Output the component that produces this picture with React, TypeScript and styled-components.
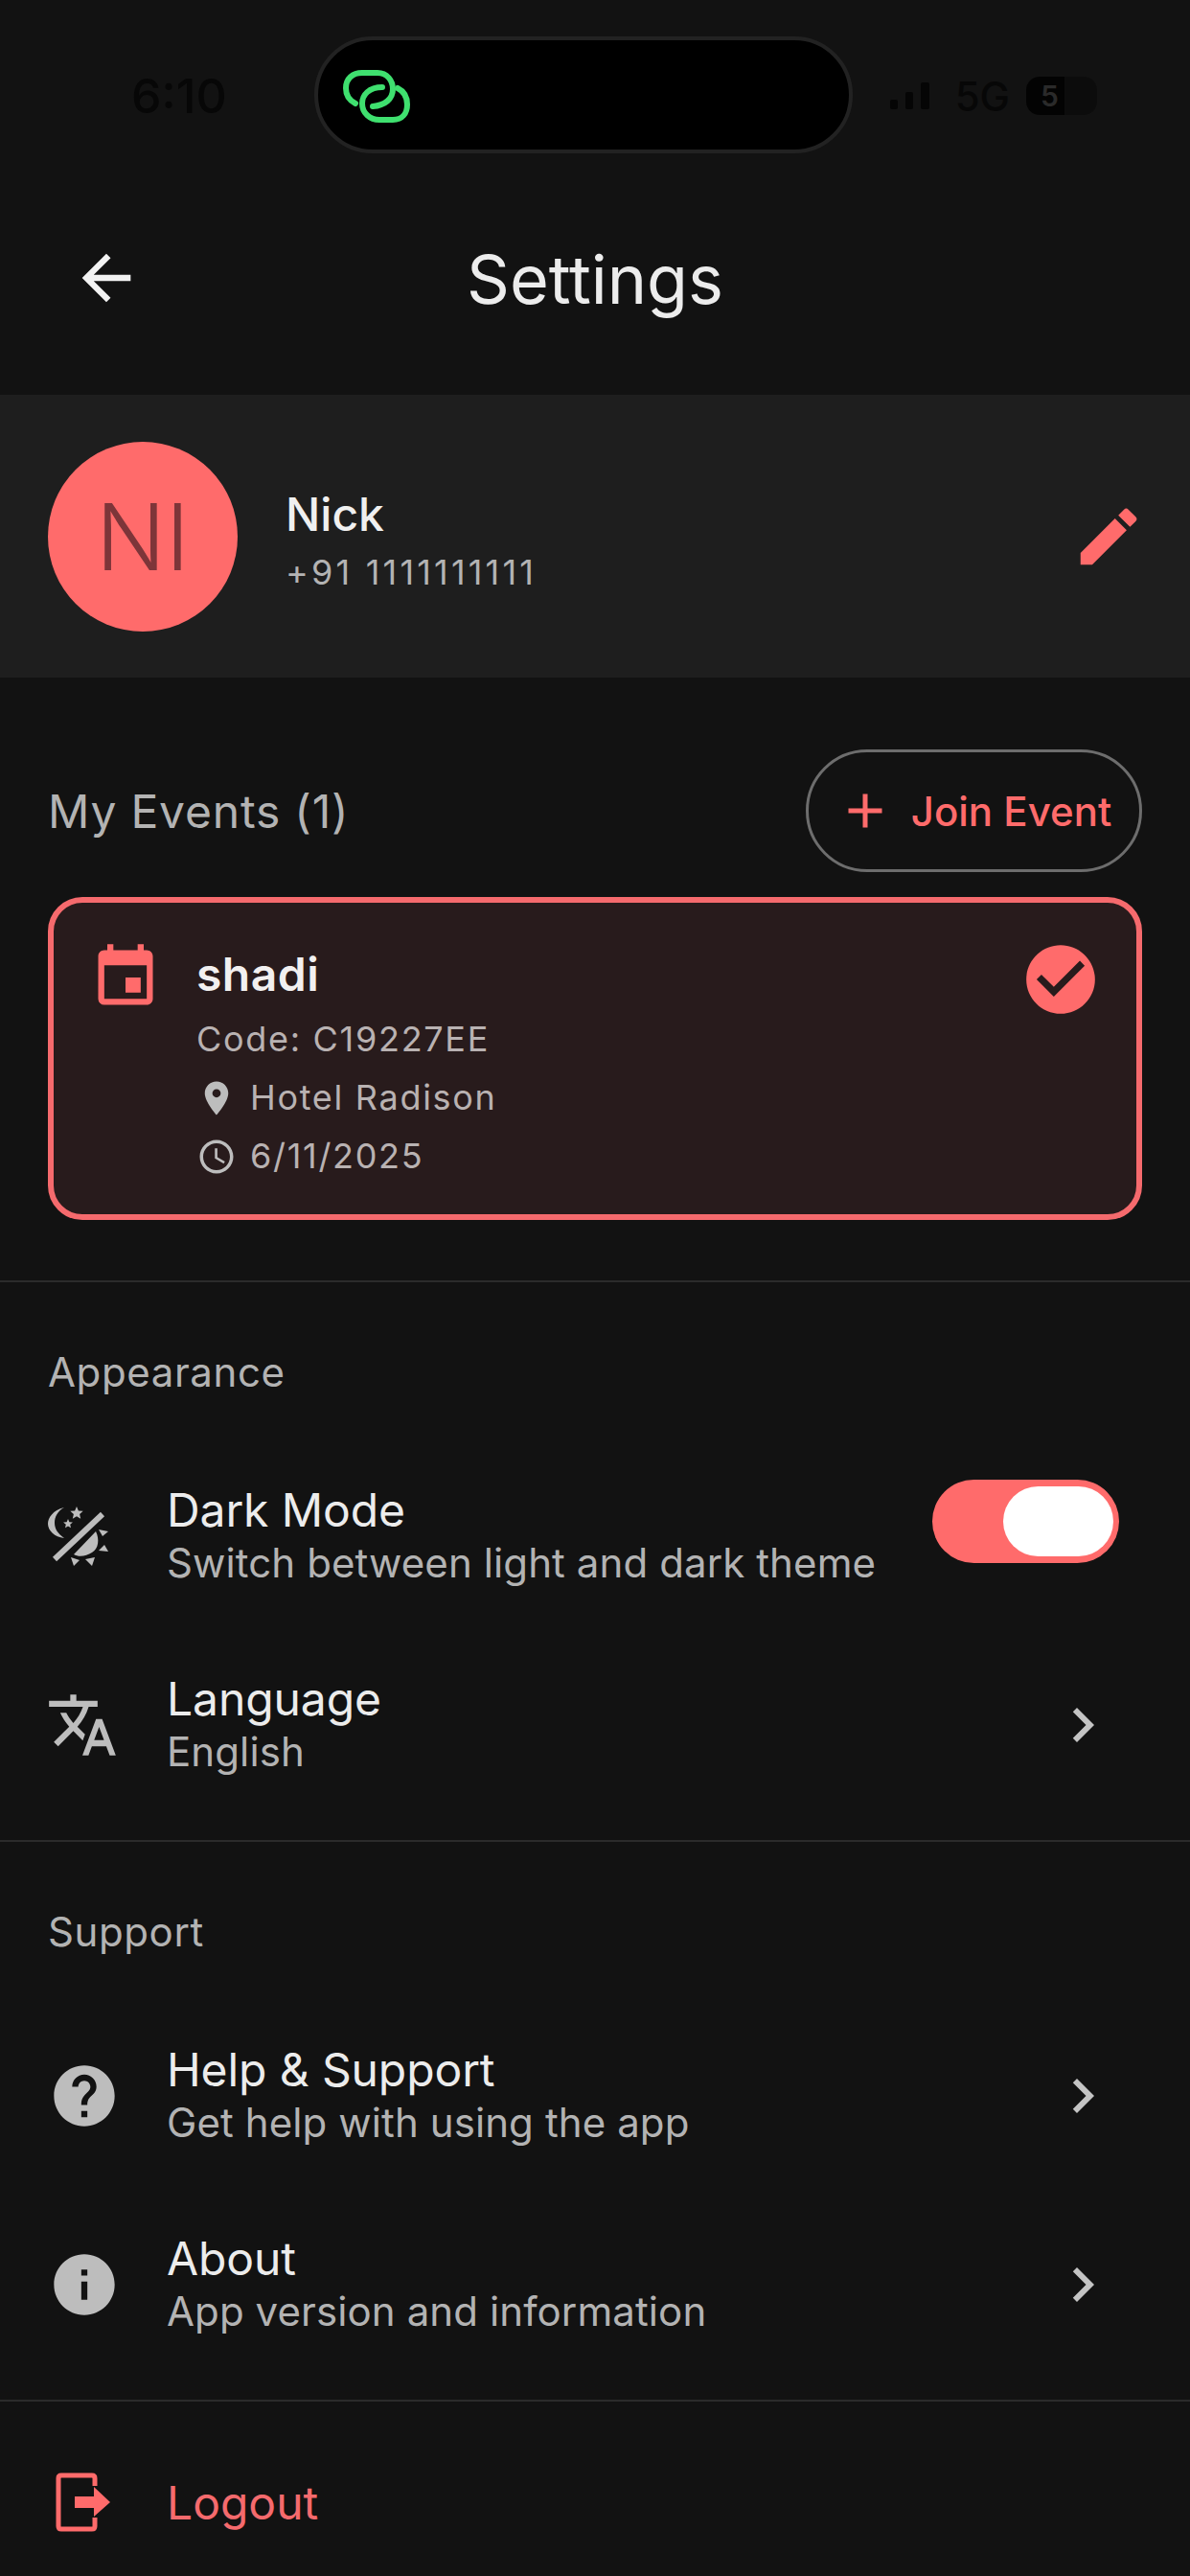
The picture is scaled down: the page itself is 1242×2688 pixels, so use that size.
import React from 'react';
import styled, { createGlobalStyle } from 'styled-components';
import {
  MdAccessTime, MdAdd, MdArrowBack, MdCheckCircle, MdChevronRight, MdEdit,
  MdEvent, MdHelp, MdInfo, MdLocationOn, MdTranslate,
} from 'react-icons/md';

const CORAL = '#ff6b6b';
const MUTED = '#b3b3b3';

const Global = createGlobalStyle`
  html, body { margin: 0; padding: 0; background: #121212; }
  * { box-sizing: border-box; }
  body { font-family: Inter, "Noto Sans", sans-serif; }
`;

const Page = styled.div`
  width: 1242px;
  height: 2688px;
  overflow: hidden;
  background: #121212;
  color: #f2f2f2;
  display: flex;
  flex-direction: column;
  & > * { flex: none; }
`;

const StatusBar = styled.div`
  height: 200px;
  padding: 38px 97px 0 137px;
  display: flex;
  align-items: flex-start;
  justify-content: space-between;
`;
const Clock = styled.div`
  width: 100px;
  height: 124px;
  display: flex;
  align-items: center;
  font-size: 50px;
  font-weight: 500;
  color: #070707;
`;
const Island = styled.div`
  width: 562px;
  height: 122px;
  margin-left: 91px;
  border-radius: 61px;
  background: #000;
  border: 4px solid #222;
  padding: 31px 0 0 26px;
  display: flex;
  align-items: flex-start;
`;
const StatusRight = styled.div`
  flex: 1;
  height: 124px;
  display: flex;
  align-items: center;
  justify-content: flex-end;
  gap: 25px;
`;
const Network = styled.span`
  font-size: 42px;
  font-weight: 500;
  color: #070707;
  margin-right: -8px;
`;
const Battery = styled.div`
  width: 74px;
  height: 40px;
  border-radius: 14px;
  background: linear-gradient(90deg, #030303 0 54%, #0c0c0c 54% 100%);
  color: #2a2a2a;
  font-size: 30px;
  font-weight: 600;
  padding-left: 15px;
  display: flex;
  align-items: center;
`;

const Header = styled.header`
  height: 212px;
  padding: 0 0 30px 0;
  display: flex;
  align-items: center;
  position: relative;
  justify-content: center;
`;
const BackButton = styled.div`
  position: absolute;
  left: 73px;
  top: 52px;
  display: flex;
  color: #f2f2f2;
`;
const Title = styled.h1`
  margin: 0;
  font-size: 70px;
  font-weight: 400;
  color: #ececec;
`;

const Profile = styled.section`
  height: 295px;
  background: #1e1e1e;
  display: flex;
  align-items: center;
  padding: 0 50px;
`;
const Avatar = styled.div`
  width: 198px;
  height: 198px;
  border-radius: 50%;
  background: ${CORAL};
  color: #7d3539;
  display: flex;
  align-items: center;
  justify-content: center;
  font-size: 96px;
  font-weight: 300;
  flex: none;
`;
const ProfileText = styled.div`
  margin: 7px 0 0 50px;
  flex: 1;
  display: flex;
  flex-direction: column;
  gap: 9px;
`;
const Name = styled.div`
  font-size: 48px;
  font-weight: 500;
  line-height: 58px;
  color: #f0f0f0;
`;
const Phone = styled.div`
  font-size: 36px;
  line-height: 44px;
  letter-spacing: 3.2px;
  color: ${MUTED};
`;
const EditSlot = styled.div`
  display: flex;
  color: ${CORAL};
  margin-right: -4px;
`;

const Events = styled.section`
  padding: 75px 50px 63px;
`;
const EventsHead = styled.div`
  display: flex;
  align-items: center;
  justify-content: space-between;
`;
const SectionLabel = styled.div`
  font-size: 48px;
  font-weight: 400;
  letter-spacing: 0.8px;
  color: ${MUTED};
`;
const JoinButton = styled.div`
  width: 351px;
  height: 128px;
  border: 3px solid #6d6d6d;
  border-radius: 64px;
  color: ${CORAL};
  display: flex;
  align-items: center;
  justify-content: center;
  gap: 18px;
  font-size: 42px;
  font-weight: 500;
`;
const EventCard = styled.div`
  margin-top: 26px;
  height: 337px;
  border: 6px solid #f56a6d;
  border-radius: 36px;
  background: #281b1c;
  padding: 44px 36px 0 42px;
  display: flex;
  align-items: flex-start;
`;
const EventIcon = styled.div`
  display: flex;
  color: ${CORAL};
  margin: -4px 0 0 -5px;
`;
const EventBody = styled.div`
  margin-left: 36px;
  flex: 1;
  display: flex;
  flex-direction: column;
`;
const EventName = styled.div`
  font-size: 48px;
  font-weight: 600;
  line-height: 62px;
  letter-spacing: 0.5px;
  margin-bottom: 6px;
  color: #f2f0f0;
`;
const EventLine = styled.div`
  font-size: 36px;
  line-height: 61px;
  letter-spacing: 1.7px;
  color: #b9b2b2;
  display: flex;
  align-items: center;
  gap: 14px;
`;
const LineIcon = styled.span`
  width: 42px;
  display: flex;
  justify-content: center;
  color: #bdbdbd;
`;
const CheckSlot = styled.div`
  display: flex;
  color: ${CORAL};
  margin-top: -7px;
`;

const Divider = styled.div`
  height: 2px;
  background: #2b2b2b;
`;
const Group = styled.section`
  padding: 64px 0 22px;
`;
const GroupLabel = styled.div`
  padding: 0 50px;
  margin-bottom: 42px;
  font-size: 42px;
  line-height: 60px;
  letter-spacing: 0.6px;
  color: ${MUTED};
`;
const Row = styled.div`
  height: 197px;
  display: flex;
  align-items: center;
  padding: 0 50px;
`;
const RowIcon = styled.div`
  width: 124px;
  flex: none;
  display: flex;
  color: #bdbdbd;
`;
const TranslateGlyph = styled(MdTranslate)`
  margin-left: -2px;
`;
const RowText = styled.div`
  flex: 1;
  display: flex;
  flex-direction: column;
`;
const RowTitle = styled.div`
  font-size: 48px;
  line-height: 56px;
  letter-spacing: -0.1px;
  color: #ececec;
`;
const RowSub = styled.div`
  font-size: 42px;
  line-height: 54px;
  letter-spacing: 0.1px;
  color: ${MUTED};
`;
const ChevronSlot = styled.div`
  display: flex;
  color: #c4c4c4;
  margin-right: 26px;
`;
const Toggle = styled.div`
  width: 195px;
  height: 87px;
  border-radius: 44px;
  background: ${CORAL};
  padding: 7px 6px;
  display: flex;
  justify-content: flex-end;
  margin: -30px 24px 0 0;
`;
const Thumb = styled.div`
  width: 115px;
  height: 73px;
  border-radius: 37px;
  background: #fff;
`;
const LogoutRow = styled.div`
  height: 204px;
  display: flex;
  align-items: center;
  padding: 6px 58px 0;
  color: #f56a6d;
  font-size: 48px;
`;
const LogoutLabel = styled.span`
  margin-left: 59px;
`;

const LinkLogo = () => (
  <svg width="70" height="55" viewBox="0 0 70 55" fill="none" stroke="#3fe06f" strokeWidth="6" strokeLinecap="round">
    <path d="M13 35C5 31 3 25 3 19C3 9 10 3 20 3H36C46 3 52 11 52 20C52 30 44 37 31 38" />
    <path d="M41 18C27 18 20 26 20 35C20 45 28 52 38 52H52C62 52 67 45 67 36C67 28 63 22 57 19" />
  </svg>
);

const SignalBars = () => (
  <svg width="44" height="30" viewBox="0 0 44 30" fill="#050505">
    <rect x="1" y="19" width="8" height="10" rx="2" />
    <rect x="17" y="11" width="8" height="18" rx="2" />
    <rect x="33" y="1" width="9" height="28" rx="2" />
  </svg>
);

const ThemeIcon = () => (
  <svg width="63" height="65" viewBox="0 0 63 65" fill="#bdbdbd">
    <path d="M17 3C5 6 0 14 0 20C0 27 7 34 17 35C10 30 7 25 7 19C7 13 10 7 17 3Z" />
    <path d="M30 2l1.9 4.4 4.8.4-3.6 3.2 1.1 4.7-4.2-2.5-4.2 2.5 1.1-4.7-3.6-3.2 4.8-.4z" />
    <path d="M21 15l1.4 3.2 3.5.3-2.7 2.3.8 3.4-3-1.8-3 1.8.8-3.4-2.7-2.3 3.5-.3z" />
    <path d="M7 57L57 10" stroke="#bdbdbd" strokeWidth="6" fill="none" />
    <path d="M27 52L50 28C54 36 53 46 46 50C40 54 32 55 27 52Z" />
    <path d="M53 26L63 28L57 33Z" />
    <path d="M53 48L63 49L59 42Z" />
    <path d="M39 57L49 55L46 64Z" />
    <path d="M24 55L33 58L27 64Z" />
  </svg>
);

const LogoutIcon = () => (
  <svg width="57" height="62" viewBox="0 0 57 62" fill="none">
    <path d="M41 14V6Q41 3 38 3H6Q3 3 3 6V56Q3 59 6 59H38Q41 59 41 56V47" stroke={CORAL} strokeWidth="5" />
    <path d="M20 25H40V15L57 31L40 46V37H20Z" fill={CORAL} />
  </svg>
);

type SettingRowProps = { icon: React.ReactNode; title: string; sub: string; trailing?: React.ReactNode };
const SettingRow = ({ icon, title, sub, trailing }: SettingRowProps) => (
  <Row>
    <RowIcon>{icon}</RowIcon>
    <RowText>
      <RowTitle>{title}</RowTitle>
      <RowSub>{sub}</RowSub>
    </RowText>
    {trailing ?? (
      <ChevronSlot>
        <MdChevronRight size={72} />
      </ChevronSlot>
    )}
  </Row>
);

export default function App() {
  return (
    <Page>
      <Global />
      <StatusBar>
        <Clock>6:10</Clock>
        <Island>
          <LinkLogo />
        </Island>
        <StatusRight>
          <SignalBars />
          <Network>5G</Network>
          <Battery>5</Battery>
        </StatusRight>
      </StatusBar>
      <Header>
        <BackButton>
          <MdArrowBack size={76} />
        </BackButton>
        <Title>Settings</Title>
      </Header>
      <Profile>
        <Avatar>NI</Avatar>
        <ProfileText>
          <Name>Nick</Name>
          <Phone>+91 1111111111</Phone>
        </ProfileText>
        <EditSlot>
          <MdEdit size={78} />
        </EditSlot>
      </Profile>
      <Events>
        <EventsHead>
          <SectionLabel>My Events (1)</SectionLabel>
          <JoinButton>
            <MdAdd size={60} />
            Join Event
          </JoinButton>
        </EventsHead>
        <EventCard>
          <EventIcon>
            <MdEvent size={76} />
          </EventIcon>
          <EventBody>
            <EventName>shadi</EventName>
            <EventLine>Code: C19227EE</EventLine>
            <EventLine>
              <LineIcon><MdLocationOn size={48} /></LineIcon>
              Hotel Radison
            </EventLine>
            <EventLine>
              <LineIcon><MdAccessTime size={44} /></LineIcon>
              6/11/2025
            </EventLine>
          </EventBody>
          <CheckSlot>
            <MdCheckCircle size={86} />
          </CheckSlot>
        </EventCard>
      </Events>
      <Divider />
      <Group>
        <GroupLabel>Appearance</GroupLabel>
        <SettingRow
          icon={<ThemeIcon />}
          title="Dark Mode"
          sub="Switch between light and dark theme"
          trailing={<Toggle><Thumb /></Toggle>}
        />
        <SettingRow icon={<TranslateGlyph size={76} />} title="Language" sub="English" />
      </Group>
      <Divider />
      <Group>
        <GroupLabel>Support</GroupLabel>
        <SettingRow icon={<MdHelp size={76} />} title="Help &amp; Support" sub="Get help with using the app" />
        <SettingRow icon={<MdInfo size={76} />} title="About" sub="App version and information" />
      </Group>
      <Divider />
      <LogoutRow>
        <LogoutIcon />
        <LogoutLabel>Logout</LogoutLabel>
      </LogoutRow>
    </Page>
  );
}
